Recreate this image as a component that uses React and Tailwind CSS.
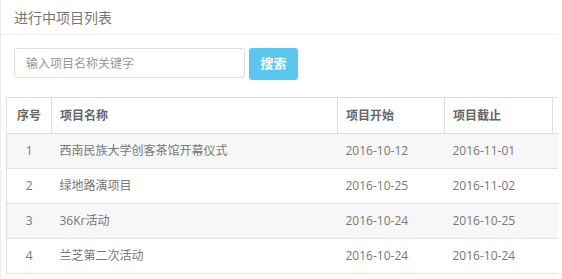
import React from "react";

const rows = [
  { id: 1, name: "西南民族大学创客茶馆开幕仪式", start: "2016-10-12", end: "2016-11-01" },
  { id: 2, name: "绿地路演项目", start: "2016-10-25", end: "2016-11-02" },
  { id: 3, name: "36Kr活动", start: "2016-10-24", end: "2016-10-25" },
  { id: 4, name: "兰芝第二次活动", start: "2016-10-24", end: "2016-10-24" },
];

const App = () => {
  return (
    <div className="w-[562px] h-[279px] overflow-hidden bg-white font-['Open_Sans','Noto_Sans_CJK_SC',sans-serif]">
      <div className="w-[558px] h-full overflow-hidden border-l border-[#ececec]">
        <div className="h-[35px] border-b border-[#efefef] pl-[13px] flex items-center text-[14px] text-[#777]">
          进行中项目列表
        </div>
        <div className="pt-[13px] pl-[5px]">
          <div className="flex items-start gap-[4px] pl-[8px]">
            <input
              className="w-[231px] h-[30px] border border-[#ddd] rounded-[3px] px-[11px] text-[12px] text-[#555] placeholder:text-[#999] outline-none"
              placeholder="输入项目名称关键字"
            />
            <button className="w-[49px] h-[32px] rounded-[3px] bg-[#5bc6f0] text-white text-[13px] font-semibold">
              搜索
            </button>
          </div>
          <table className="mt-[17px] border-collapse text-[12px] text-[#777] table-fixed w-[620px]">
            <colgroup>
              <col className="w-[45px]" />
              <col className="w-[286px]" />
              <col className="w-[107px]" />
              <col className="w-[108px]" />
              <col />
            </colgroup>
            <thead>
              <tr className="h-[36px] text-[#666]">
                <th className="border border-[#ddd] text-center font-bold">序号</th>
                <th className="border border-[#ddd] text-left pl-[8px] font-bold">项目名称</th>
                <th className="border border-[#ddd] text-left pl-[8px] font-bold">项目开始</th>
                <th className="border border-[#ddd] text-left pl-[8px] font-bold">项目截止</th>
                <th className="border border-[#ddd]"></th>
              </tr>
            </thead>
            <tbody>
              {rows.map((r, i) => (
                <tr
                  key={r.id}
                  className={`h-[35px] border-b border-[#e3e3e3] ${i % 2 === 0 ? "bg-[#f7f7f7]" : "bg-white"}`}
                >
                  <td className="border-l border-[#ddd] text-center">{r.id}</td>
                  <td className="pl-[8px]">{r.name}</td>
                  <td className="pl-[8px]">{r.start}</td>
                  <td className="pl-[8px]">{r.end}</td>
                  <td></td>
                </tr>
              ))}
            </tbody>
          </table>
        </div>
      </div>
    </div>
  );
};

export default App;
